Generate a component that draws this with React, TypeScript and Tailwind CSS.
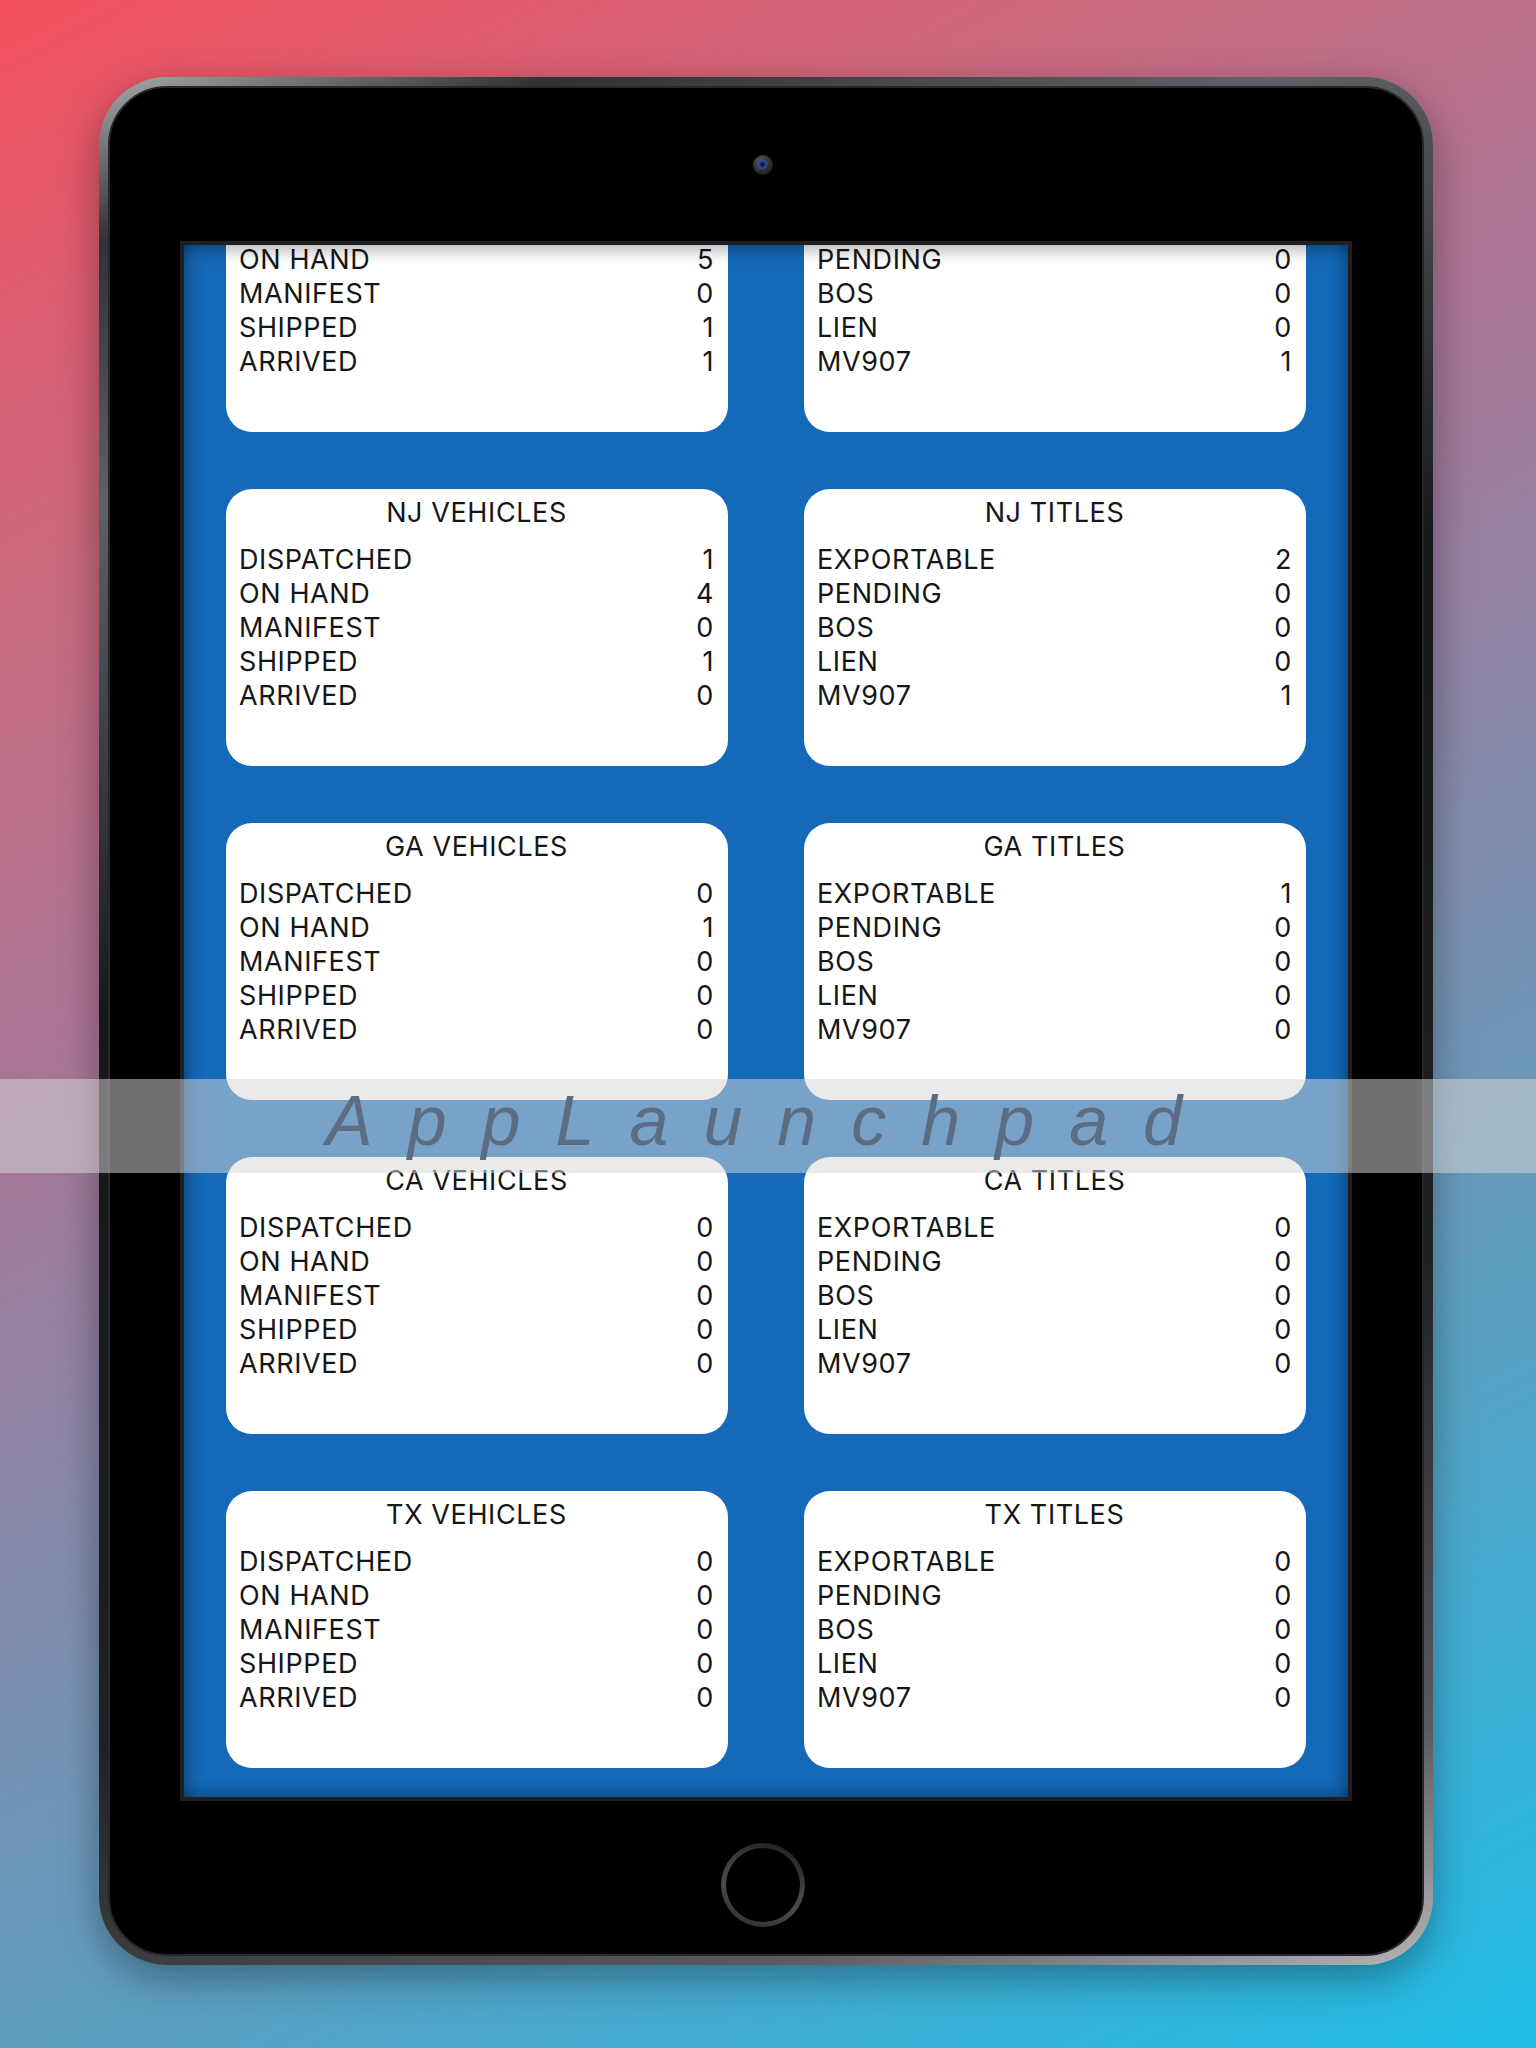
import React from "react";

type Card = { title: string; rows: [string, string][] };

const vehicles = (st: string, v: string[]): Card => ({
  title: `${st} VEHICLES`,
  rows: [
    ["DISPATCHED", v[0]],
    ["ON HAND", v[1]],
    ["MANIFEST", v[2]],
    ["SHIPPED", v[3]],
    ["ARRIVED", v[4]],
  ],
});

const titles = (st: string, v: string[]): Card => ({
  title: `${st} TITLES`,
  rows: [
    ["EXPORTABLE", v[0]],
    ["PENDING", v[1]],
    ["BOS", v[2]],
    ["LIEN", v[3]],
    ["MV907", v[4]],
  ],
});

const cards: Card[] = [
  vehicles("NY", ["0", "5", "0", "1", "1"]),
  titles("NY", ["0", "0", "0", "0", "1"]),
  vehicles("NJ", ["1", "4", "0", "1", "0"]),
  titles("NJ", ["2", "0", "0", "0", "1"]),
  vehicles("GA", ["0", "1", "0", "0", "0"]),
  titles("GA", ["1", "0", "0", "0", "0"]),
  vehicles("CA", ["0", "0", "0", "0", "0"]),
  titles("CA", ["0", "0", "0", "0", "0"]),
  vehicles("TX", ["0", "0", "0", "0", "0"]),
  titles("TX", ["0", "0", "0", "0", "0"]),
];

function StatCard({ card }: { card: Card }) {
  return (
    <div className="h-[277px] rounded-[26px] bg-white pt-[7px] pl-[13px] pr-[14px] text-[27px] leading-[34px] text-[#161618] font-['Inter','Noto_Sans',sans-serif] tracking-[0.6px]">
      <div className="text-center">{card.title}</div>
      <div className="mt-[13px] flex flex-col">
        {card.rows.map(([label, value]) => (
          <div key={label} className="flex justify-between">
            <span>{label}</span>
            <span>{value}</span>
          </div>
        ))}
      </div>
    </div>
  );
}

export default function App() {
  return (
    <div className="relative w-[1536px] h-[2048px] overflow-hidden bg-[linear-gradient(152deg,#f4505e_0%,#c76a80_22%,#a1799b_42%,#6c98b8_66%,#1fbee8_100%)]">
      <div className="pt-[77px] pl-[99px]">
        {/* Tablet */}
        <div className="w-[1334px] h-[1888px] rounded-[68px] p-[9px] bg-[linear-gradient(160deg,#a8aaae_0%,#2e3136_7%,#5e6167_18%,#161719_40%,#1f2023_70%,#5a5b60_90%,#b5b5b8_100%)] shadow-[0_14px_40px_rgba(0,0,0,0.35)]">
          <div className="w-full h-full rounded-[59px] border-[2px] border-[#26272b] bg-black flex flex-col items-center">
            {/* top bezel with camera */}
            <div className="h-[153px] w-full flex items-center justify-center">
              <div className="mr-[7px] w-[20px] h-[20px] rounded-full bg-[radial-gradient(circle_at_40%_35%,#5c5c60,#202022_70%)] flex items-center justify-center">
                <div className="w-[9px] h-[9px] rounded-full bg-[radial-gradient(circle,#0d1a40_25%,#2f54a8_60%,#1c2f66_100%)]" />
              </div>
            </div>
            {/* screen */}
            <div className="w-[1172px] h-[1560px] border-[4px] border-[#1f1f21] bg-[#1469b8] relative overflow-hidden">
              <div className="-mt-[90px] px-[42px] grid grid-cols-2 gap-x-[76px] gap-y-[57px]">
                {cards.map((c) => (
                  <StatCard key={c.title} card={c} />
                ))}
              </div>
              <div className="pointer-events-none absolute inset-0 shadow-[inset_0_16px_14px_-8px_rgba(0,0,0,0.22),inset_14px_0_14px_-8px_rgba(0,0,0,0.25),inset_-14px_0_14px_-8px_rgba(0,0,0,0.25),inset_0_-14px_14px_-8px_rgba(0,0,0,0.2)]" />
            </div>
            {/* bottom bezel with home button */}
            <div className="h-[151px] w-full flex justify-center pt-[42px]">
              <div className="mr-[7px] w-[84px] h-[84px] rounded-full p-[5px] bg-[linear-gradient(200deg,#1a1a1c_0%,#3a3a3e_35%,#4c4c50_60%,#2a2a2c_100%)]">
                <div className="w-full h-full rounded-full bg-black" />
              </div>
            </div>
          </div>
        </div>
      </div>

      {/* Watermark banner */}
      <div className="absolute left-0 top-[1079px] w-full h-[94px] bg-[rgba(214,214,214,0.52)] flex items-center justify-center">
        <span className="pl-[7px] -mt-[10px] text-[70px] leading-[94px] italic text-[#5a6d83] tracking-[35px] font-['Liberation_Sans',Arial,sans-serif]">
          AppLaunchpad
        </span>
      </div>
    </div>
  );
}
